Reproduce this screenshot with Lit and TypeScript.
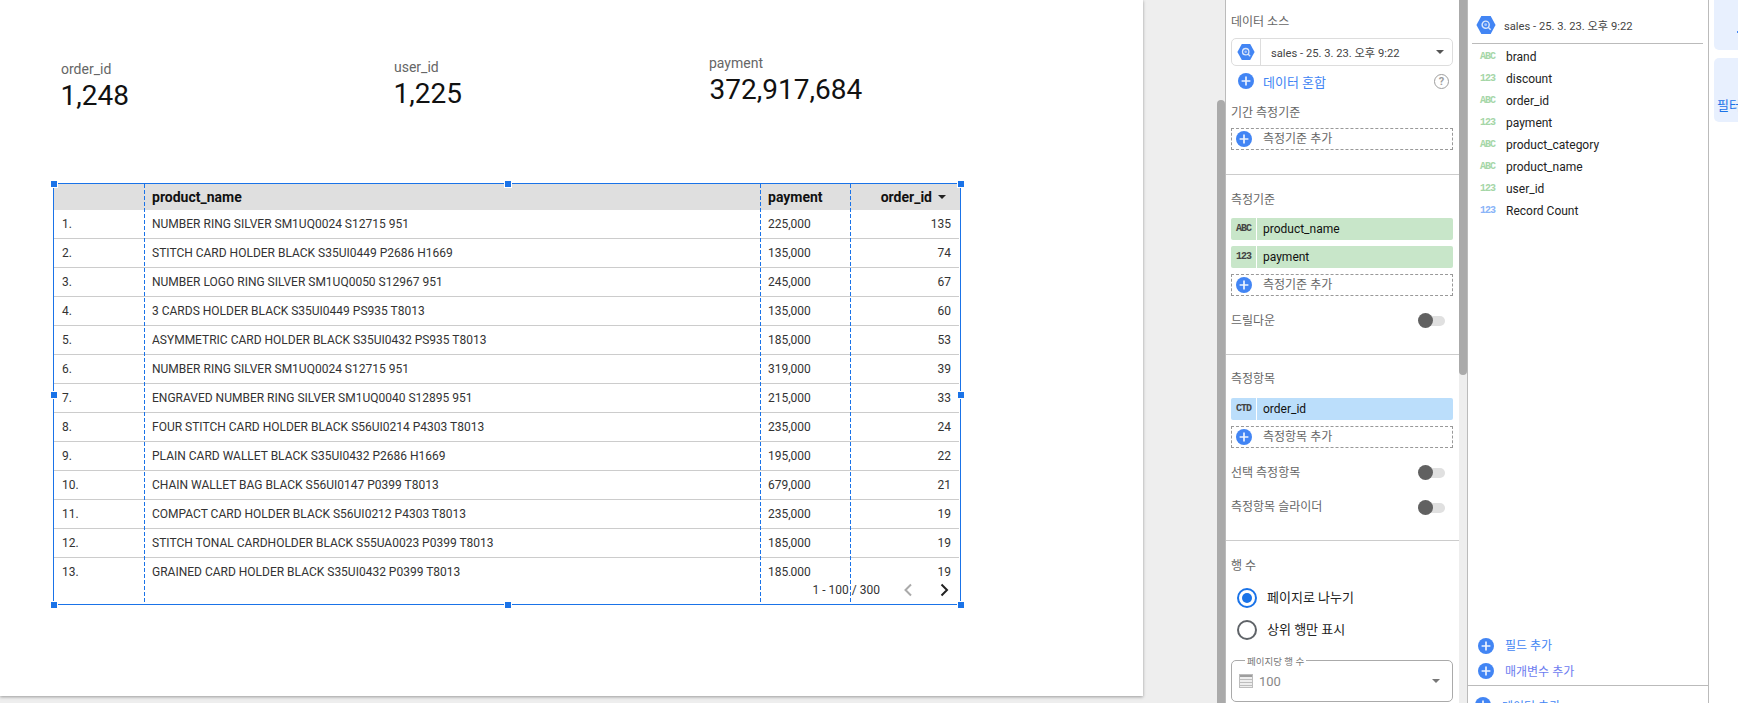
import { LitElement, html, css, svg } from "lit";
import { customElement } from "lit/decorators.js";

const rows = [
  ["NUMBER RING SILVER SM1UQ0024 S12715 951", "225,000", "135"],
  ["STITCH CARD HOLDER BLACK S35UI0449 P2686 H1669", "135,000", "74"],
  ["NUMBER LOGO RING SILVER SM1UQ0050 S12967 951", "245,000", "67"],
  ["3 CARDS HOLDER BLACK S35UI0449 PS935 T8013", "135,000", "60"],
  ["ASYMMETRIC CARD HOLDER BLACK S35UI0432 PS935 T8013", "185,000", "53"],
  ["NUMBER RING SILVER SM1UQ0024 S12715 951", "319,000", "39"],
  ["ENGRAVED NUMBER RING SILVER SM1UQ0040 S12895 951", "215,000", "33"],
  ["FOUR STITCH CARD HOLDER BLACK S56UI0214 P4303 T8013", "235,000", "24"],
  ["PLAIN CARD WALLET BLACK S35UI0432 P2686 H1669", "195,000", "22"],
  ["CHAIN WALLET BAG BLACK S56UI0147 P0399 T8013", "679,000", "21"],
  ["COMPACT CARD HOLDER BLACK S56UI0212 P4303 T8013", "235,000", "19"],
  ["STITCH TONAL CARDHOLDER BLACK S55UA0023 P0399 T8013", "185,000", "19"],
  ["GRAINED CARD HOLDER BLACK S35UI0432 P0399 T8013", "185,000", "19"],
];

const fields = [
  ["ABC", "brand", "dim"],
  ["123", "discount", "num"],
  ["ABC", "order_id", "dim"],
  ["123", "payment", "num"],
  ["ABC", "product_category", "dim"],
  ["ABC", "product_name", "dim"],
  ["123", "user_id", "num"],
  ["123", "Record Count", "metric"],
];

const handles = ["tl", "tc", "tr", "ml", "mr", "bl", "bc", "br"];

const plusIcon = (size = 16) => html`
  <svg class="plus" width=${size} height=${size} viewBox="0 0 16 16">
    <circle cx="8" cy="8" r="8" fill="#4285f4" />
    <path d="M8 3.6v8.8M3.6 8h8.8" stroke="#fff" stroke-width="1.7" opacity=".9" />
  </svg>
`;

const hexIcon = (size = 18) => html`
  <svg class="hex" width=${size} height=${size} viewBox="0 0 18 18">
    <polygon points="4.8,1 13.2,1 17.6,9 13.2,17 4.8,17 0.4,9" fill="#4285f4" />
    <circle cx="8.7" cy="8.7" r="3.2" fill="none" stroke="#dbe6fb" stroke-width="1.3" />
    <path d="M11 11l2.2 2.2" stroke="#dbe6fb" stroke-width="1.3" />
    ${svg`<circle cx="8.7" cy="8.7" r="1.3" fill="#a9c5f8" />`}
  </svg>
`;

const caret = (color = "#555") => html`
  <svg width="8" height="4" viewBox="0 0 8 4"><path d="M0 0h8L4 4z" fill=${color} /></svg>
`;

@customElement("app-root")
export class AppRoot extends LitElement {
  static styles = css`
    :host {
      display: block;
      width: 1738px;
      height: 703px;
      overflow: hidden;
      background: #eee;
      font-family: Roboto, "Noto Sans CJK KR", sans-serif;
      font-size: 12px;
      color: #333;
    }
    .app {
      display: flex;
      height: 703px;
    }
    .stage {
      width: 1217px;
      flex: none;
    }
    .canvas {
      position: relative;
      width: 1143px;
      height: 696px;
      background: #fff;
      box-shadow: 0 1px 3px rgba(0, 0, 0, 0.35);
    }

    /* scorecards and the table sit freely on the report canvas */
    .score {
      position: absolute;
      display: flex;
      flex-direction: column;
    }
    .score.order { left: 61px; top: 60px; }
    .score.user { left: 394px; top: 58px; }
    .score.pay { left: 709px; top: 54px; }
    .score .label {
      font-size: 14px;
      line-height: 18px;
      color: #666;
    }
    .score .value {
      font-size: 28px;
      line-height: 34px;
      margin: 1px 0 0 -0.5px;
      color: #111;
    }
    .score.pay .value {
      margin-left: 0.5px;
    }

    .chart {
      position: absolute;
      left: 53px;
      top: 183px;
      width: 908px;
      height: 422px;
      box-sizing: border-box;
      border: 1px solid #1a73e8;
      display: flex;
      flex-direction: column;
    }
    .grid-row {
      display: grid;
      grid-template-columns: 90px 616px 90px 109px;
      width: 905px;
    }
    .head {
      width: 906px;
      height: 26px;
      line-height: 26px;
      background: #dfdfdf;
      font-size: 14px;
      font-weight: 700;
      color: #111;
      flex: none;
    }
    .head .sort {
      display: flex;
      align-items: center;
      justify-content: flex-end;
      gap: 6px;
      padding-right: 13px;
    }
    .body {
      height: 366px;
      overflow: hidden;
      flex: none;
    }
    .row {
      height: 29px;
      line-height: 28px;
      box-sizing: border-box;
      border-bottom: 1px solid #ccc;
    }
    .row:last-child {
      border-bottom: none;
    }
    .cell {
      padding-left: 8px;
      white-space: nowrap;
    }
    .cell.num {
      padding: 0 8px 0 0;
      text-align: right;
    }
    .foot {
      flex: 1;
      display: flex;
      align-items: center;
      justify-content: flex-end;
      gap: 20px;
      padding-right: 8px;
    }
    .foot svg {
      display: block;
    }
    .guide {
      position: absolute;
      top: 0;
      bottom: 0;
      width: 1px;
      background: linear-gradient(#1a73e8 66%, transparent 0) 0 0 / 1px 6px;
    }
    .handle {
      position: absolute;
      width: 6px;
      height: 6px;
      background: #1a73e8;
      box-shadow: 0 0 0 1px #fff;
    }
    .tl, .tc, .tr { top: -3px; }
    .ml, .mr { top: calc(50% - 2px); }
    .bl, .bc, .br { bottom: -4px; }
    .tl, .ml, .bl { left: -3px; }
    .tc, .bc { left: calc(50% - 2px); }
    .tr, .mr, .br { right: -4px; }

    /* scrollbars */
    .scroll {
      width: 9px;
      flex: none;
      box-sizing: border-box;
      background: #eee;
      border-right: 1px solid #bbb;
    }
    .scroll i {
      display: block;
      width: 8px;
      background: #aaa;
    }
    .scroll.left {
      padding-top: 100px;
    }
    .scroll.left i {
      height: 603px;
      border-radius: 4px 4px 0 0;
    }
    .scroll.right i {
      height: 375px;
      border-radius: 0 0 4px 4px;
    }

    /* setup panel */
    .setup {
      width: 233px;
      flex: none;
      background: #fff;
      overflow: hidden;
    }
    .sec {
      padding: 17px 6px 24px 5px;
      border-bottom: 1px solid #ccc;
    }
    .sec.first {
      padding-top: 14px;
    }
    .sec.third {
      padding: 16px 6px 23px 5px;
    }
    .sec.last {
      border-bottom: none;
    }
    .title {
      line-height: 16px;
      color: #666;
      font-size: 12px;
    }
    .select {
      margin-top: 8px;
      height: 28px;
      box-sizing: border-box;
      border: 1px solid #ddd;
      border-radius: 5px;
      display: flex;
      align-items: center;
    }
    .select .src {
      width: 28px;
      height: 100%;
      flex: none;
      display: flex;
      align-items: center;
      justify-content: center;
      border-right: 1px solid #ddd;
    }
    .select .name {
      flex: 1;
      padding-left: 10px;
      color: #444;
      font-size: 11.2px;
    }
    .select .arrow {
      display: flex;
      padding-right: 8px;
    }
    .blend {
      margin-top: 5px;
      height: 20px;
      display: flex;
      align-items: center;
      padding-left: 7px;
      color: #4285f4;
      font-size: 13px;
    }
    .blend span {
      flex: 1;
      padding-left: 9px;
    }
    .blend .help {
      flex: none;
      width: 13px;
      height: 13px;
      padding: 0;
      margin-right: 4px;
      border: 1.5px solid #9e9e9e;
      border-radius: 50%;
      color: #9e9e9e;
      font-size: 11px;
      font-weight: 700;
      line-height: 13px;
      text-align: center;
    }
    .period {
      margin-top: 14px;
    }
    .add {
      height: 22px;
      box-sizing: border-box;
      border: 1px dashed #999;
      display: flex;
      align-items: center;
      padding-left: 4px;
      color: #666;
      margin-top: 6px;
    }
    .add.spaced {
      margin-top: 7px;
    }
    .add span {
      padding: 0 0 3px 11px;
    }
    .chip {
      height: 22px;
      border-radius: 2px;
      display: flex;
      align-items: center;
      margin-top: 6px;
      color: #111;
    }
    .chip.top {
      margin-top: 10px;
    }
    .third .chip.top {
      margin-top: 11px;
    }
    .chip.green { background: #c8e6c9; }
    .chip.blue { background: #bbdefb; }
    .chip b {
      width: 25px;
      height: 100%;
      text-align: center;
      border-right: 1px solid #fff;
      font: 700 10px/22px "Liberation Mono", monospace;
      letter-spacing: -1px;
      color: #444;
      flex: none;
    }
    .chip span {
      padding-left: 6px;
    }
    .switch-row {
      height: 20px;
      margin-top: 14px;
      display: flex;
      align-items: center;
      justify-content: space-between;
      color: #666;
    }
    .switch-row.near {
      margin-top: 15px;
    }
    .switch-row span {
      padding-bottom: 2px;
    }
    .switch-row.near span {
      padding-bottom: 4px;
    }
    .switch {
      position: relative;
      width: 27px;
      height: 15px;
      margin-right: 8px;
    }
    .switch::before {
      content: "";
      position: absolute;
      left: 8px;
      right: 0;
      top: 3px;
      height: 10px;
      border-radius: 5px;
      background: #e0e0e0;
    }
    .switch::after {
      content: "";
      position: absolute;
      left: 0;
      top: 0;
      width: 15px;
      height: 15px;
      border-radius: 50%;
      background: #616161;
    }
    .radio-row {
      height: 20px;
      margin-top: 12px;
      padding-left: 6px;
      display: flex;
      align-items: center;
      gap: 10px;
      font-size: 13px;
      color: #222;
    }
    .radio-row.top {
      margin-top: 14px;
    }
    .radio-row span {
      padding-bottom: 4px;
    }
    .radio {
      width: 20px;
      height: 20px;
      box-sizing: border-box;
      border: 2px solid #5f6368;
      border-radius: 50%;
      display: flex;
      align-items: center;
      justify-content: center;
    }
    .radio.on {
      border-color: #1a73e8;
    }
    .radio.on::after {
      content: "";
      width: 10px;
      height: 10px;
      border-radius: 50%;
      background: #1a73e8;
    }
    .rows-box {
      position: relative;
      margin-top: 20px;
      height: 42px;
      box-sizing: border-box;
      border: 1px solid #aaa;
      border-radius: 5px;
      display: flex;
      align-items: center;
      padding: 0 8px 0 7px;
      color: #888;
      font-size: 13px;
    }
    .rows-box .legend {
      position: absolute;
      left: 13px;
      top: -5px;
      padding: 0 2px;
      background: #fff;
      font-size: 9.5px;
      line-height: 11px;
      color: #777;
    }
    .rows-box .val {
      flex: 1;
      padding-left: 6px;
    }
    .rows-box svg {
      display: block;
    }
    .rows-box .arrow {
      display: flex;
      padding-right: 4px;
    }

    /* data panel */
    .data {
      width: 241px;
      height: 703px;
      flex: none;
      box-sizing: border-box;
      background: #fff;
      border-right: 1px solid #bbb;
      overflow: hidden;
    }
    .data .src {
      height: 44px;
      box-sizing: border-box;
      margin: 0 5px 0 4px;
      padding: 6px 0 0 4px;
      border-bottom: 1px solid #bbb;
      display: flex;
      align-items: center;
      gap: 8px;
      color: #444;
      font-size: 11.2px;
    }
    .list {
      height: 589px;
      padding-top: 2px;
      box-sizing: border-box;
    }
    .field {
      height: 22px;
      display: flex;
      align-items: center;
      padding-left: 12px;
      color: #222;
    }
    .field b {
      width: 26px;
      flex: none;
      font: 700 10px/22px "Liberation Mono", monospace;
      letter-spacing: -1px;
    }
    .field .dim, .field .num { color: #a5d6a7; }
    .field .metric { color: #8ab4f8; }
    .data-foot {
      height: 25px;
      display: flex;
      align-items: center;
      padding-left: 10px;
      gap: 11px;
      font-size: 12px;
      color: #4285f4;
    }
    .data-foot span {
      padding-bottom: 2px;
    }
    .data-foot.param {
      color: #6d7cf0;
      height: 26px;
      margin-bottom: 1px;
    }
    .data-add {
      border-top: 1px solid #bbb;
      height: 38px;
      display: flex;
      align-items: center;
      padding-left: 7px;
      gap: 11px;
      color: #4285f4;
      font-size: 12px;
    }

    /* right rail */
    .rail {
      flex: 1;
      min-width: 0;
      background: #fff;
      padding-left: 5px;
      overflow: hidden;
    }
    .card {
      background: #e8f0fe;
      overflow: hidden;
      white-space: nowrap;
      color: #1a73e8;
      font-size: 13px;
    }
    .card.one {
      height: 50px;
      border-radius: 0 0 0 5px;
      box-sizing: border-box;
      padding: 31px 0 0 23px;
    }
    .card.one i {
      display: block;
      width: 4px;
      height: 2px;
      background: #4285f4;
    }
    .card.two {
      height: 64px;
      margin-top: 8px;
      border-radius: 5px 0 0 5px;
      box-sizing: border-box;
      padding: 40px 0 0 3px;
      line-height: 16px;
    }
  `;

  renderTable() {
    return html`
      <div class="chart">
        <div class="grid-row head">
          <div></div>
          <div class="cell">product_name</div>
          <div class="cell">payment</div>
          <div class="sort"><span>order_id</span>${caret("#222")}</div>
        </div>
        <div class="body">
          ${rows.map(
            (r, i) => html`
              <div class="grid-row row">
                <div class="cell">${i + 1}.</div>
                <div class="cell">${r[0]}</div>
                <div class="cell">${r[1]}</div>
                <div class="cell num">${r[2]}</div>
              </div>
            `
          )}
        </div>
        <div class="foot">
          <span>1 - 100 / 300</span>
          <svg width="16" height="16" viewBox="0 0 16 16">
            <path d="M11 2.5L5.5 8l5.5 5.5" fill="none" stroke="#aaa" stroke-width="2" />
          </svg>
          <svg width="16" height="16" viewBox="0 0 16 16">
            <path d="M5.5 2.5L11 8l-5.5 5.5" fill="none" stroke="#222" stroke-width="2" />
          </svg>
        </div>
        ${[90, 706, 796].map((x) => html`<div class="guide" style="left:${x}px"></div>`)}
        ${handles.map((h) => html`<div class="handle ${h}"></div>`)}
      </div>
    `;
  }

  renderSetup() {
    return html`
      <div class="setup">
        <div class="sec first">
          <div class="title">데이터 소스</div>
          <div class="select">
            <div class="src">${hexIcon()}</div>
            <div class="name">sales - 25. 3. 23. 오후 9:22</div>
            <div class="arrow">${caret()}</div>
          </div>
          <div class="blend">
            ${plusIcon()}<span>데이터 혼합</span><span class="help">?</span>
          </div>
          <div class="title period">기간 측정기준</div>
          <div class="add spaced">${plusIcon()}<span>측정기준 추가</span></div>
        </div>
        <div class="sec">
          <div class="title">측정기준</div>
          <div class="chip green top"><b>ABC</b><span>product_name</span></div>
          <div class="chip green"><b>123</b><span>payment</span></div>
          <div class="add">${plusIcon()}<span>측정기준 추가</span></div>
          <div class="switch-row"><span>드릴다운</span><div class="switch"></div></div>
        </div>
        <div class="sec third">
          <div class="title">측정항목</div>
          <div class="chip blue top"><b>CTD</b><span>order_id</span></div>
          <div class="add">${plusIcon()}<span>측정항목 추가</span></div>
          <div class="switch-row"><span>선택 측정항목</span><div class="switch"></div></div>
          <div class="switch-row near"><span>측정항목 슬라이더</span><div class="switch"></div></div>
        </div>
        <div class="sec last">
          <div class="title">행 수</div>
          <div class="radio-row top"><div class="radio on"></div><span>페이지로 나누기</span></div>
          <div class="radio-row"><div class="radio"></div><span>상위 행만 표시</span></div>
          <div class="rows-box">
            <span class="legend">페이지당 행 수</span>
            <svg width="14" height="14" viewBox="0 0 14 14">
              <rect x="0" y="0" width="14" height="14" fill="#eee" />
              <rect x="0" y="0" width="14" height="3" fill="#9e9e9e" />
              <path d="M0 5.5h14M0 8.5h14M0 11.5h14" stroke="#bdbdbd" />
              <rect x=".5" y=".5" width="13" height="13" fill="none" stroke="#bdbdbd" />
            </svg>
            <span class="val">100</span>
            <div class="arrow">${caret("#777")}</div>
          </div>
        </div>
      </div>
    `;
  }

  renderData() {
    return html`
      <div class="data">
        <div class="src">${hexIcon(20)}<span>sales - 25. 3. 23. 오후 9:22</span></div>
        <div class="list">
          ${fields.map(
            (f) => html`<div class="field"><b class=${f[2]}>${f[0]}</b><span>${f[1]}</span></div>`
          )}
        </div>
        <div class="data-foot">${plusIcon()}<span>필드 추가</span></div>
        <div class="data-foot param">${plusIcon()}<span>매개변수 추가</span></div>
        <div class="data-add">${plusIcon()}<span>데이터 추가</span></div>
      </div>
    `;
  }

  render() {
    return html`
      <div class="app">
        <div class="stage">
          <div class="canvas">
            <div class="score order">
              <span class="label">order_id</span><span class="value">1,248</span>
            </div>
            <div class="score user">
              <span class="label">user_id</span><span class="value">1,225</span>
            </div>
            <div class="score pay">
              <span class="label">payment</span><span class="value">372,917,684</span>
            </div>
            ${this.renderTable()}
          </div>
        </div>
        <div class="scroll left"><i></i></div>
        ${this.renderSetup()}
        <div class="scroll right"><i></i></div>
        ${this.renderData()}
        <div class="rail">
          <div class="card one"><i></i></div>
          <div class="card two">필터</div>
        </div>
      </div>
    `;
  }
}
